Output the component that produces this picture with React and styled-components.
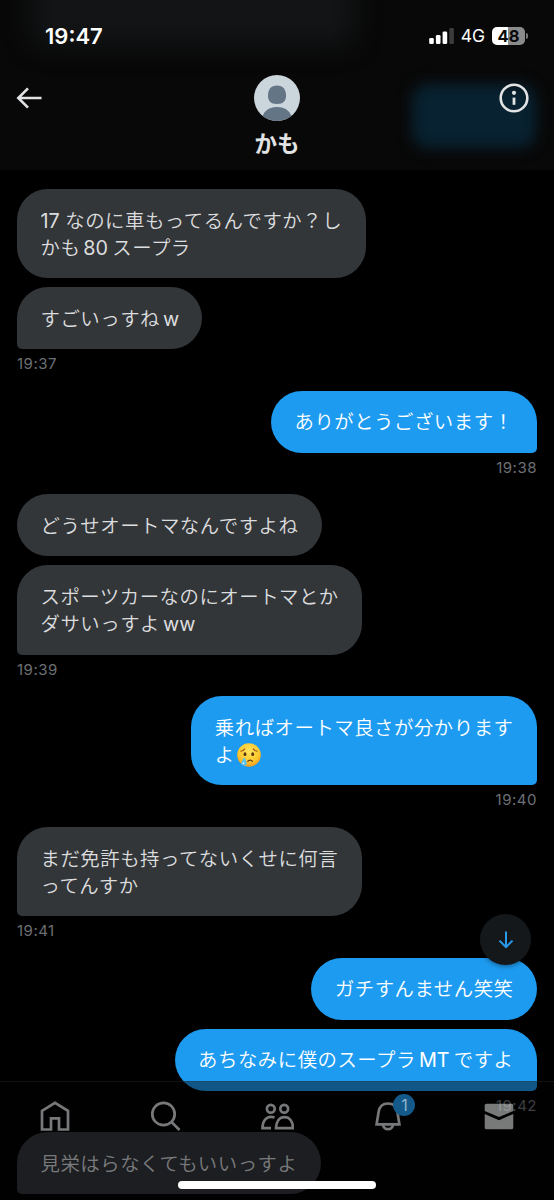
import React from "react";
import styled, { createGlobalStyle } from "styled-components";

const groups = [
  {
    time: "19:37",
    messages: [
      [{ latin: "17", start: true }, "なのに車もってるんですか？し\nかも", { latin: "80" }, "スープラ"],
      ["すごいっすね", { latin: "w", end: true }],
    ],
  },
  { mine: true, time: "19:38", messages: [["ありがとうございます！"]] },
  {
    time: "19:39",
    messages: [
      ["どうせオートマなんですよね"],
      ["スポーツカーなのにオートマとか\nダサいっすよ", { latin: "ww", end: true }],
    ],
  },
  {
    mine: true,
    time: "19:40",
    messages: [["乗ればオートマ良さが分かります\nよ", { emoji: true }]],
  },
  { time: "19:41", messages: [["まだ免許も持ってないくせに何言\nってんすか"]] },
  {
    mine: true,
    time: "19:42",
    messages: [
      ["ガチすんません笑笑"],
      ["あちなみに僕のスープラ", { latin: "MT" }, "ですよ"],
    ],
  },
  { messages: [["見栄はらなくてもいいっすよ"]] },
];

const CryingFace = () => (
  <Emoji viewBox="0 0 24 24" role="img" aria-label="crying face">
    <defs>
      <radialGradient id="face" cx="50%" cy="35%" r="65%">
        <stop offset="0" stopColor="#ffe45c" />
        <stop offset="0.65" stopColor="#fdc92f" />
        <stop offset="1" stopColor="#f09a1c" />
      </radialGradient>
    </defs>
    <circle cx="12" cy="12" r="11.8" fill="url(#face)" />
    <path
      d="M3.8 8.2c1.7-.2 3-1 3.9-2.3M20.2 8.2c-1.7-.2-3-1-3.9-2.3"
      fill="none"
      stroke="#93541a"
      strokeWidth="1.1"
      strokeLinecap="round"
    />
    <ellipse cx="8" cy="11.2" rx="1.4" ry="1.9" fill="#5b3512" />
    <ellipse cx="15.7" cy="11.2" rx="1.4" ry="1.9" fill="#5b3512" />
    <path
      d="M10.8 18.3c1-1.7 3.6-1.7 4.6 0"
      fill="none"
      stroke="#6b3c12"
      strokeWidth="1.3"
      strokeLinecap="round"
    />
    <path
      d="M7.2 14.2c1.2 2 2.6 4 2.6 5.8a2.7 2.7 0 0 1-5.4 0c0-1.8 1.6-3.8 2.8-5.8z"
      fill="#5cc3ee"
    />
    <circle cx="6.4" cy="20.2" r="0.9" fill="#c8efff" />
  </Emoji>
);

const renderPart = (part, i) => {
  if (part.latin) {
    return (
      <Latin key={i} $start={part.start} $end={part.end}>
        {part.latin}
      </Latin>
    );
  }
  if (part.emoji) return <CryingFace key={i} />;
  return part;
};

const App = () => {
  return (
    <Phone>
      <GlobalStyle />
      <Header>
        <BlurredBubble $left={30} $top={-30} $w={325} $h={76} $color="#121415" $blur={12} />
        <BlurredBubble $left={412} $top={84} $w={124} $h={64} $color="#082231" $blur={7} />
        <StatusBar>
          <Clock>19:47</Clock>
          <Status>
            <svg width="25" height="18" viewBox="0 0 25 18">
              <rect x="0.2" y="11" width="4.6" height="6" rx="1.3" fill="#fff" />
              <rect x="6.9" y="8" width="4.6" height="9" rx="1.3" fill="#fff" />
              <rect x="13.6" y="4.5" width="4.6" height="12.5" rx="1.3" fill="#fff" />
              <rect x="20.3" y="1" width="4.6" height="16" rx="1.3" fill="#3b3b3b" />
            </svg>
            <Network>4G</Network>
            <Battery>
              <Level>48</Level>
              <Cap />
            </Battery>
          </Status>
        </StatusBar>
        <TitleRow>
          <BackArrow viewBox="0 0 30 46">
            <path d="M25.5 23H2.5M12 13.3L2.3 23l9.7 9.7" />
          </BackArrow>
          <Profile>
            <svg width="46" height="46" viewBox="0 0 46 46">
              <defs>
                <clipPath id="avatar">
                  <circle cx="23" cy="23" r="23" />
                </clipPath>
              </defs>
              <g clipPath="url(#avatar)">
                <rect width="46" height="46" fill="#cbd5dc" />
                <path
                  d="M14 20.5c0-6 3-10 9-10s9 4 9 10c0 5.5-2.5 8.500-9 8.500s-9-3-9-8.500z"
                  fill="#647585"
                />
                <path d="M8 46c0-9 6-14 15-14s15 5 15 14z" fill="#647585" />
              </g>
            </svg>
            <Name>かも</Name>
          </Profile>
          <svg width="30" height="46" viewBox="0 0 30 46">
            <circle cx="15" cy="23" r="13.3" fill="none" stroke="#e2e3e4" strokeWidth="2.6" />
            <circle cx="15" cy="17.8" r="2.1" fill="#e2e3e4" />
            <rect x="13.6" y="22.6" width="2.8" height="7.2" fill="#e2e3e4" />
          </svg>
        </TitleRow>
      </Header>

      <Conversation>
        {groups.map((group, i) => (
          <Group key={i} $mine={group.mine}>
            {group.messages.map((parts, j) => (
              <Bubble key={j} $mine={group.mine} $last={j === group.messages.length - 1}>
                {parts.map(renderPart)}
              </Bubble>
            ))}
            {group.time && <Time>{group.time}</Time>}
          </Group>
        ))}
      </Conversation>

      <ScrollDown>
        <svg width="16" height="20" viewBox="0 0 16 20">
          <path
            d="M8 1.5v15.5M1.5 10.6L8 17.1l6.5-6.5"
            fill="none"
            stroke="#2a9bea"
            strokeWidth="2"
          />
        </svg>
      </ScrollDown>

      <TabBar>
        <Tab>
          <Icon viewBox="0 0 32 32">
            <path d="M3 10.8L16 2.9l13 7.9V29.5h-9V18.3h-8V29.500H3z" />
          </Icon>
        </Tab>
        <Tab>
          <Icon viewBox="0 0 32 32">
            <circle cx="13.5" cy="14" r="11.2" />
            <path d="M21.5 22l8 8" />
          </Icon>
        </Tab>
        <Tab>
          <Icon viewBox="0 0 34 32" $wide>
            <circle cx="10.8" cy="8.7" r="3.9" />
            <circle cx="24.2" cy="8.7" r="3.9" />
            <path d="M14.5 17.6c-6-2.6-12 1.4-12 10.5h8.5" />
            <path d="M16 28.1c.2-7 3.5-11 8.500-11s8.300 4 8.500 11z" />
          </Icon>
        </Tab>
        <Tab>
          <Icon viewBox="0 0 32 32">
            <path d="M4.6 24.3l2-12.3C7.4 6.3 11 3.5 16 3.5s8.600 2.800 9.400 8.500l2 12.300z" />
            <path d="M10.8 24.5c.6 2.9 2.5 4.7 5.2 4.7s4.6-1.8 5.2-4.7" />
          </Icon>
          <Badge>1</Badge>
        </Tab>
        <Tab>
          <Icon viewBox="0 0 32 32" $solid>
            <path d="M1.7 11V5.5c0-1 .8-1.800 1.800-1.800h25c1 0 1.800.8 1.800 1.800V11L16 17z" />
            <path d="M1.7 13.9L16 20.2l14.3-6.3v13.600c0 1-.8 1.800-1.800 1.800h-25c-1 0-1.800-.8-1.800-1.800z" />
          </Icon>
        </Tab>
      </TabBar>
      <HomeIndicator />
    </Phone>
  );
};

export default App;

const GlobalStyle = createGlobalStyle`
  body {
    margin: 0;
    background: #000;
  }
`;

const Phone = styled.div`
  position: relative;
  width: 554px;
  height: 1200px;
  overflow: hidden;
  background: #000;
  font-family: "Inter", "Noto Sans CJK JP", sans-serif;
`;

const Header = styled.header`
  position: relative;
  height: 170px;
  overflow: hidden;
  background: #080808;
`;

/* messages scrolled behind the translucent header */
const BlurredBubble = styled.div`
  position: absolute;
  left: ${(p) => p.$left}px;
  top: ${(p) => p.$top}px;
  width: ${(p) => p.$w}px;
  height: ${(p) => p.$h}px;
  border-radius: 16px;
  background: ${(p) => p.$color};
  filter: blur(${(p) => p.$blur}px);
`;

const StatusBar = styled.div`
  position: relative;
  display: flex;
  justify-content: space-between;
  align-items: center;
  height: 71px;
  padding: 0 26px 0 45px;
  box-sizing: border-box;
  color: #fff;
`;

const Clock = styled.span`
  font-size: 22px;
  font-weight: 600;
`;

const Status = styled.div`
  display: flex;
  align-items: center;
`;

const Network = styled.span`
  margin: 0 7px 0 7px;
  font-size: 17.5px;
  font-weight: 400;
`;

const Battery = styled.div`
  display: flex;
  align-items: center;
  gap: 1px;
`;

const Level = styled.span`
  width: 33px;
  height: 18px;
  border-radius: 5px;
  background: linear-gradient(90deg, #fff 48%, #8b8b8b 48%);
  color: #0a0a0a;
  font-size: 16.5px;
  font-weight: 700;
  line-height: 18px;
  text-align: center;
`;

const Cap = styled.span`
  width: 2px;
  height: 6px;
  border-radius: 0 2px 2px 0;
  background: #777;
`;

const TitleRow = styled.div`
  position: relative;
  display: flex;
  justify-content: space-between;
  align-items: flex-start;
  padding: 4px 25px 0 16px;
`;

const BackArrow = styled.svg`
  width: 30px;
  height: 46px;
  margin-right: 9px;
  fill: none;
  stroke: #e2e3e4;
  stroke-width: 2.6;
`;

const Profile = styled.div`
  display: flex;
  flex-direction: column;
  align-items: center;
`;

const Name = styled.span`
  color: #e2e3e4;
  font-size: 22.5px;
  font-weight: 700;
  line-height: 32px;
  margin-top: 7px;
`;

const Conversation = styled.main`
  display: flex;
  flex-direction: column;
  padding: 19px 17px 0;
`;

const Group = styled.section`
  display: flex;
  flex-direction: column;
  align-items: ${(p) => (p.$mine ? "flex-end" : "flex-start")};
`;

const Bubble = styled.div`
  padding: 16.7px 23.5px 18.1px;
  border-radius: 31px;
  ${(p) =>
    p.$last &&
    (p.$mine ? "border-bottom-right-radius: 5px;" : "border-bottom-left-radius: 5px;")}
  background: ${(p) => (p.$mine ? "#1d9bf0" : "#333639")};
  color: ${(p) => (p.$mine ? "#fff" : "#dcdddf")};
  font-family: "Noto Sans CJK JP", sans-serif;
  font-size: 19.4px;
  font-weight: 350;
  letter-spacing: 0.52px;
  line-height: 27.2px;
  white-space: pre;

  & + & {
    margin-top: 9px;
  }
`;

const Latin = styled.span`
  margin-left: ${(p) => (p.$start ? 0 : 3)}px;
  margin-right: ${(p) => (p.$end ? -0.8 : p.$start ? 5.5 : 4.2)}px;
  font-family: "Inter", sans-serif;
  font-size: 19.8px;
  font-weight: 400;
  letter-spacing: 0;
  line-height: 1;
`;

const Emoji = styled.svg`
  width: 24px;
  height: 24px;
  margin-left: 2.5px;
  vertical-align: -4.5px;
`;

const Time = styled.time`
  height: 41.6px;
  box-sizing: border-box;
  padding: 5px 0 0;
  color: #6c7074;
  font-size: 15px;
  letter-spacing: 0.5px;
  line-height: 19px;
`;

const ScrollDown = styled.button`
  position: absolute;
  left: 480px;
  top: 914px;
  display: flex;
  justify-content: center;
  align-items: center;
  width: 51px;
  height: 51px;
  padding: 0;
  border: 0;
  border-radius: 50%;
  background: #15181b;
  box-shadow: 0 1px 5px rgba(0, 0, 0, 0.45);
`;

const TabBar = styled.nav`
  position: absolute;
  left: 0;
  right: 0;
  bottom: 0;
  display: flex;
  height: 119px;
  box-sizing: border-box;
  border-top: 1px solid rgba(50, 54, 58, 0.35);
  background: rgba(3, 3, 4, 0.45);
`;

const Tab = styled.div`
  position: relative;
  flex: 1;
  display: flex;
  justify-content: center;
  padding-top: 18px;
`;

const Icon = styled.svg`
  width: ${(p) => (p.$wide ? 34 : 32)}px;
  height: 32px;
  fill: ${(p) => (p.$solid ? "rgba(231, 233, 234, 0.52)" : "none")};
  stroke: ${(p) => (p.$solid ? "none" : "#777879")};
  stroke-width: 2.7;
`;

const Badge = styled.span`
  position: absolute;
  left: 61px;
  top: 12px;
  width: 22px;
  height: 22px;
  border-radius: 50%;
  background: #135a8b;
  color: #90b3cb;
  font-size: 16px;
  line-height: 22px;
  text-align: center;
`;

const HomeIndicator = styled.div`
  position: absolute;
  left: 178px;
  bottom: 11px;
  width: 198px;
  height: 8px;
  border-radius: 4px;
  background: #fff;
`;
